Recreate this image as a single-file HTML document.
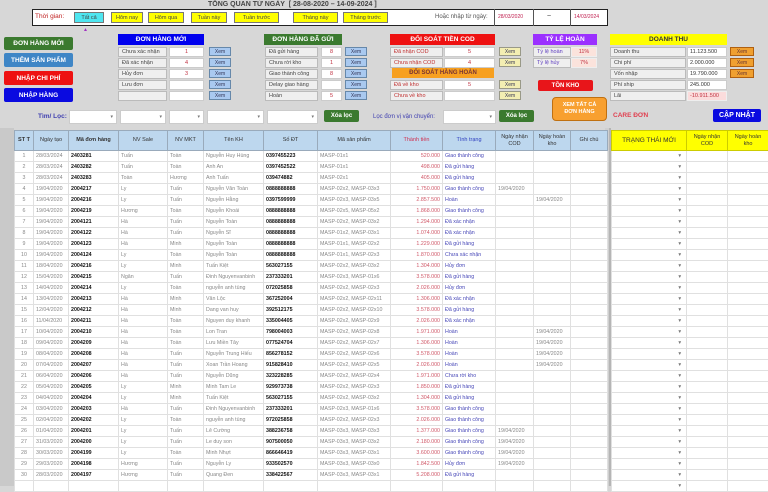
<!DOCTYPE html>
<html><head><meta charset="utf-8">
<style>
*{margin:0;padding:0;box-sizing:border-box}
body{width:768px;height:486px;overflow:hidden;background:#d7d7d7;font-family:"Liberation Sans",sans-serif;position:relative;font-size:6px;color:#333}
.a{position:absolute}
.t{position:absolute;white-space:nowrap;line-height:1}
.btn{position:absolute;display:flex;align-items:center;justify-content:center;font-weight:bold;color:#fff;border-radius:2px;white-space:nowrap}
.yb{position:absolute;background:#ffff00;border:1px solid #777;display:flex;align-items:center;justify-content:center;font-size:5.5px;color:#444;top:12px;height:11px}
.hd{position:absolute;display:flex;align-items:center;justify-content:center;font-weight:bold;font-size:6.5px;height:11px;top:34px}
.lb{position:absolute;background:#efefef;border:1px solid #bbb;height:10px;font-size:5.5px;padding-left:3px;line-height:9px;color:#444}
.vl{position:absolute;background:#fff;border:1px solid #ccc;height:10px;font-size:5.5px;text-align:center;line-height:9px;color:#c03040}
.xm{position:absolute;background:#a9c9f0;border:1px solid #6688aa;height:9px;width:22px;font-size:5px;text-align:center;line-height:8px;color:#335}
.xy{background:#f3eeb2;border-color:#998}
.xo{background:#f0a030;border-color:#b06010;color:#633}
.dd{position:absolute;background:#fff;top:110px;height:14px;border:1px solid #ccc}
.dd:after{content:"▾";position:absolute;right:3px;top:3px;font-size:5px;color:#777}
table{border-collapse:collapse;table-layout:fixed;position:absolute}
td,th{border:1px solid #e0e0e0;height:11px;font-size:5.3px;white-space:nowrap;overflow:hidden;padding:0 2px;font-weight:normal;color:#888}
th{background:#bdd7ee;border:1px solid #9ab;height:20px;color:#333;font-size:5.5px;white-space:normal;text-align:center;line-height:1.1}
tbody td{background:#fff}
td.b{color:#111;font-weight:bold}
td.r{color:#d05868;text-align:right}
td.s{color:#4848b8}
td.c{text-align:center}
#R th{background:#ffff00;border-color:#cc0}
#R td.d{text-align:right;padding-right:5px;color:#777}
</style></head><body>
<div class="a" style="left:0;top:128px;width:14px;height:358px;background:#c9c9c9"></div>
<div class="a" style="left:605px;top:128px;width:6px;height:358px;background:#cfcfcf;border-right:2px solid #b5b5b5"></div>

<div class="t" style="left:208px;top:1px;font-size:7px;font-weight:bold;color:#444">TỔNG QUAN TỪ NGÀY &nbsp;[ 28-08-2020 – 14-09-2024 ]</div>
<div class="a" style="left:32px;top:9px;width:576px;height:17px;background:#fff;border:1px solid #222"></div>
<div class="t" style="left:35px;top:14px;font-size:6.5px;color:#c02020">Thời gian:</div>
<div class="yb" style="left:74px;width:30px;background:#4ee6f0">Tất cả</div>
<div class="yb" style="left:111px;width:32px">Hôm nay</div>
<div class="yb" style="left:148px;width:36px">Hôm qua</div>
<div class="yb" style="left:191px;width:36px">Tuần này</div>
<div class="yb" style="left:234px;width:45px">Tuần trước</div>
<div class="yb" style="left:293px;width:45px">Tháng này</div>
<div class="yb" style="left:343px;width:45px">Tháng trước</div>
<div class="t" style="left:435px;top:14px;font-size:6px;color:#555">Hoặc nhập từ ngày:</div>
<div class="a" style="left:494px;top:9px;width:1px;height:17px;background:#555"></div>
<div class="t" style="left:498px;top:15px;font-size:5px;color:#c02050">28/03/2020</div>
<div class="a" style="left:533px;top:9px;width:1px;height:17px;background:#555"></div>
<div class="t" style="left:547px;top:13px;font-size:7px;color:#333">~</div>
<div class="a" style="left:570px;top:9px;width:1px;height:17px;background:#555"></div>
<div class="t" style="left:574px;top:15px;font-size:5px;color:#c02050">14/03/2024</div>
<div class="t" style="left:83px;top:28px;font-size:5px;color:#a030c0">▲</div>

<div class="btn" style="left:4px;top:37px;width:69px;height:13px;background:#3b7a2f;font-size:6.5px">ĐƠN HÀNG MỚI</div>
<div class="btn" style="left:4px;top:53px;width:69px;height:14px;background:#3f86c6;font-size:6.5px">THÊM SẢN PHẨM</div>
<div class="btn" style="left:4px;top:71px;width:69px;height:14px;background:#ee1111;font-size:6.5px">NHẬP CHI PHÍ</div>
<div class="btn" style="left:4px;top:88px;width:69px;height:14px;background:#0a0ae0;font-size:6.5px">NHẬP HÀNG</div>

<!-- Don hang moi -->
<div class="hd" style="left:118px;width:86px;background:#0000ee;color:#fff">ĐƠN HÀNG MỚI</div>
<div class="lb" style="left:118px;top:47px;width:49px">Chưa xác nhận</div><div class="vl" style="left:169px;top:47px;width:35px">1</div><div class="xm" style="left:209px;top:47px">Xem</div>
<div class="lb" style="left:118px;top:58px;width:49px">Đã xác nhận</div><div class="vl" style="left:169px;top:58px;width:35px">4</div><div class="xm" style="left:209px;top:58px">Xem</div>
<div class="lb" style="left:118px;top:69px;width:49px">Hủy đơn</div><div class="vl" style="left:169px;top:69px;width:35px">3</div><div class="xm" style="left:209px;top:69px">Xem</div>
<div class="lb" style="left:118px;top:80px;width:49px">Lưu đơn</div><div class="vl" style="left:169px;top:80px;width:35px"></div><div class="xm" style="left:209px;top:80px">Xem</div>
<div class="lb" style="left:118px;top:91px;width:49px"></div><div class="vl" style="left:169px;top:91px;width:35px"></div><div class="xm" style="left:209px;top:91px">Xem</div>

<!-- Don hang da gui -->
<div class="hd" style="left:264px;width:78px;background:#3b7a2f;color:#fff">ĐƠN HÀNG ĐÃ GỬI</div>
<div class="lb" style="left:265px;top:47px;width:53px">Đã gửi hàng</div><div class="vl" style="left:321px;top:47px;width:21px">8</div><div class="xm" style="left:345px;top:47px">Xem</div>
<div class="lb" style="left:265px;top:58px;width:53px">Chưa rời kho</div><div class="vl" style="left:321px;top:58px;width:21px">1</div><div class="xm" style="left:345px;top:58px">Xem</div>
<div class="lb" style="left:265px;top:69px;width:53px">Giao thành công</div><div class="vl" style="left:321px;top:69px;width:21px">8</div><div class="xm" style="left:345px;top:69px">Xem</div>
<div class="lb" style="left:265px;top:80px;width:53px">Delay giao hàng</div><div class="vl" style="left:321px;top:80px;width:21px"></div><div class="xm" style="left:345px;top:80px">Xem</div>
<div class="lb" style="left:265px;top:91px;width:53px">Hoàn</div><div class="vl" style="left:321px;top:91px;width:21px">5</div><div class="xm" style="left:345px;top:91px">Xem</div>

<!-- COD -->
<div class="hd" style="left:390px;width:105px;background:#ee1111;color:#fff">ĐỐI SOÁT TIỀN COD</div>
<div class="lb" style="left:390px;top:47px;width:53px;color:#c03030">Đã nhận COD</div><div class="vl" style="left:444px;top:47px;width:51px">5</div><div class="xm xy" style="left:499px;top:47px">Xem</div>
<div class="lb" style="left:390px;top:58px;width:53px;color:#c03030">Chưa nhận COD</div><div class="vl" style="left:444px;top:58px;width:51px">4</div><div class="xm xy" style="left:499px;top:58px">Xem</div>
<div class="hd" style="left:392px;top:68px;height:10px;width:102px;background:#f7a020;color:#733;font-size:6px">ĐỐI SOÁT HÀNG HOÀN</div>
<div class="lb" style="left:390px;top:80px;width:53px;color:#c03030">Đã về kho</div><div class="vl" style="left:444px;top:80px;width:51px">5</div><div class="xm xy" style="left:499px;top:80px">Xem</div>
<div class="lb" style="left:390px;top:91px;width:53px;color:#c03030">Chưa về kho</div><div class="vl" style="left:444px;top:91px;width:51px"></div><div class="xm xy" style="left:499px;top:91px">Xem</div>

<!-- Ty le hoan -->
<div class="hd" style="left:533px;width:64px;background:#9b30ff;color:#fff">TỶ LỆ HOÀN</div>
<div class="lb" style="left:533px;top:47px;width:38px;color:#6040c0">Tỷ lệ hoàn</div><div class="vl" style="left:571px;top:47px;width:26px;background:#fbe3dc;border-color:#eee">11%</div>
<div class="lb" style="left:533px;top:58px;width:38px;color:#6040c0">Tỷ lệ hủy</div><div class="vl" style="left:571px;top:58px;width:26px;background:#fbe3dc;border-color:#eee">7%</div>
<div class="btn" style="left:538px;top:80px;width:55px;height:11px;background:#e8151a;font-size:6px">TỒN KHO</div>
<div class="btn" style="left:552px;top:97px;width:55px;height:24px;background:#f8a030;border:1px solid #c07010;border-radius:4px;font-size:5.5px;line-height:1.2;text-align:center;flex-direction:column">XEM TẤT CẢ<br>ĐƠN HÀNG</div>

<!-- Doanh thu -->
<div class="hd" style="left:610px;width:117px;background:#ffff00;color:#333">DOANH THU</div>
<div class="lb" style="left:610px;top:47px;width:76px">Doanh thu</div><div class="vl" style="left:687px;top:47px;width:40px;text-align:left;padding-left:2px;color:#333">11.123.500</div><div class="xm xo" style="left:730px;top:47px;width:24px">Xem</div>
<div class="lb" style="left:610px;top:58px;width:76px">Chi phí</div><div class="vl" style="left:687px;top:58px;width:40px;text-align:left;padding-left:2px;color:#333">2.000.000</div><div class="xm xo" style="left:730px;top:58px;width:24px">Xem</div>
<div class="lb" style="left:610px;top:69px;width:76px">Vốn nhập</div><div class="vl" style="left:687px;top:69px;width:40px;text-align:left;padding-left:2px;color:#333">19.790.000</div><div class="xm xo" style="left:730px;top:69px;width:24px">Xem</div>
<div class="lb" style="left:610px;top:80px;width:76px">Phí ship</div><div class="vl" style="left:687px;top:80px;width:40px;text-align:left;padding-left:2px;color:#333">245.000</div>
<div class="lb" style="left:610px;top:91px;width:76px">Lãi</div><div class="vl" style="left:687px;top:91px;width:40px;text-align:left;padding-left:2px;background:#fbdcdc;border-color:#eee">-10.911.500</div>
<div class="t" style="left:613px;top:113px;font-size:6.5px;font-weight:bold;color:#e04050">CARE ĐƠN</div>
<div class="btn" style="left:713px;top:109px;width:48px;height:13px;background:#0a0ae0;font-size:7px;border-radius:2px">CẬP NHẬT</div>

<!-- filter -->
<div class="t" style="left:38px;top:114px;font-size:6.5px;color:#4040b0;font-weight:bold">Tìm/ Lọc:</div>
<div class="dd" style="left:69px;width:48px"></div>
<div class="dd" style="left:120px;width:46px"></div>
<div class="dd" style="left:169px;width:35px"></div>
<div class="dd" style="left:207px;width:57px"></div>
<div class="dd" style="left:267px;width:51px"></div>
<div class="btn" style="left:324px;top:110px;width:35px;height:12px;background:#3b7a2f;font-size:6px">Xóa lọc</div>
<div class="t" style="left:373px;top:114px;font-size:6px;color:#4040b0">Lọc đơn vị vận chuyển:</div>
<div class="dd" style="left:443px;width:53px"></div>
<div class="btn" style="left:499px;top:110px;width:35px;height:12px;background:#3b7a2f;font-size:6px">Xóa lọc</div>

<table style="left:14px;top:130px;width:593px">
<colgroup><col style="width:19px"><col style="width:35px"><col style="width:50px"><col style="width:49px"><col style="width:36px"><col style="width:60px"><col style="width:54px"><col style="width:73px"><col style="width:52px"><col style="width:53px"><col style="width:38px"><col style="width:37px"><col style="width:37px"></colgroup>
<thead><tr><th style="font-weight:bold">ST T</th><th>Ngày tạo</th><th style="font-weight:bold">Mã đơn hàng</th><th>NV Sale</th><th>NV MKT</th><th>Tên KH</th><th>Số ĐT</th><th>Mã sản phẩm</th><th style="color:#d03050">Thành tiền</th><th style="color:#3040c0">Tình trạng</th><th>Ngày nhận COD</th><th>Ngày hoàn kho</th><th>Ghi chú</th></tr></thead>
<tbody>
<tr><td class="c">1</td><td>28/03/2024</td><td class="b">2403281</td><td>Tuấn</td><td>Toàn</td><td>Nguyễn Huy Hùng</td><td class="b">0397455223</td><td>MASP-01x1</td><td class="r">520.000</td><td class="s">Giao thành công</td><td></td><td></td><td></td></tr>
<tr><td class="c">2</td><td>28/03/2024</td><td class="b">2403282</td><td>Tuấn</td><td>Toàn</td><td>Anh An</td><td class="b">0397452522</td><td>MASP-01x1</td><td class="r">498.000</td><td class="s">Đã gửi hàng</td><td></td><td></td><td></td></tr>
<tr><td class="c">3</td><td>28/03/2024</td><td class="b">2403283</td><td>Toàn</td><td>Hương</td><td>Anh Tuấn</td><td class="b">039474882</td><td>MASP-02x1</td><td class="r">405.000</td><td class="s">Đã gửi hàng</td><td></td><td></td><td></td></tr>
<tr><td class="c">4</td><td>19/04/2020</td><td class="b">2004217</td><td>Ly</td><td>Tuấn</td><td>Nguyễn Văn Toàn</td><td class="b">0888888888</td><td>MASP-02x2, MASP-03x3</td><td class="r">1.750.000</td><td class="s">Giao thành công</td><td>19/04/2020</td><td></td><td></td></tr>
<tr><td class="c">5</td><td>19/04/2020</td><td class="b">2004216</td><td>Ly</td><td>Tuấn</td><td>Nguyễn Hằng</td><td class="b">0397599999</td><td>MASP-02x3, MASP-03x5</td><td class="r">2.857.500</td><td class="s">Hoàn</td><td></td><td>19/04/2020</td><td></td></tr>
<tr><td class="c">6</td><td>19/04/2020</td><td class="b">2004219</td><td>Hương</td><td>Toàn</td><td>Nguyễn Khoái</td><td class="b">0888888888</td><td>MASP-02x5, MASP-05x2</td><td class="r">1.868.000</td><td class="s">Giao thành công</td><td></td><td></td><td></td></tr>
<tr><td class="c">7</td><td>19/04/2020</td><td class="b">2004121</td><td>Hà</td><td>Tuấn</td><td>Nguyễn Toàn</td><td class="b">0888888888</td><td>MASP-02x2, MASP-03x2</td><td class="r">1.294.000</td><td class="s">Đã xác nhận</td><td></td><td></td><td></td></tr>
<tr><td class="c">8</td><td>19/04/2020</td><td class="b">2004122</td><td>Hà</td><td>Tuấn</td><td>Nguyễn Sĩ</td><td class="b">0888888888</td><td>MASP-01x2, MASP-03x1</td><td class="r">1.074.000</td><td class="s">Đã xác nhận</td><td></td><td></td><td></td></tr>
<tr><td class="c">9</td><td>19/04/2020</td><td class="b">2004123</td><td>Hà</td><td>Minh</td><td>Nguyễn Toàn</td><td class="b">0888888888</td><td>MASP-01x1, MASP-02x2</td><td class="r">1.229.000</td><td class="s">Đã gửi hàng</td><td></td><td></td><td></td></tr>
<tr><td class="c">10</td><td>19/04/2020</td><td class="b">2004124</td><td>Ly</td><td>Toàn</td><td>Nguyễn Toàn</td><td class="b">0888888888</td><td>MASP-01x1, MASP-02x3</td><td class="r">1.870.000</td><td class="s">Chưa xác nhận</td><td></td><td></td><td></td></tr>
<tr><td class="c">11</td><td>18/04/2020</td><td class="b">2004216</td><td>Ly</td><td>Minh</td><td>Tuấn Kiệt</td><td class="b">563027155</td><td>MASP-02x2, MASP-03x2</td><td class="r">1.304.000</td><td class="s">Hủy đơn</td><td></td><td></td><td></td></tr>
<tr><td class="c">12</td><td>15/04/2020</td><td class="b">2004215</td><td>Ngân</td><td>Tuấn</td><td>Đinh Nguyenvanbinh</td><td class="b">237333201</td><td>MASP-02x3, MASP-01x6</td><td class="r">3.578.000</td><td class="s">Đã gửi hàng</td><td></td><td></td><td></td></tr>
<tr><td class="c">13</td><td>14/04/2020</td><td class="b">2004214</td><td>Ly</td><td>Toàn</td><td>nguyễn anh tùng</td><td class="b">072025858</td><td>MASP-02x2, MASP-02x3</td><td class="r">2.026.000</td><td class="s">Hủy đơn</td><td></td><td></td><td></td></tr>
<tr><td class="c">14</td><td>13/04/2020</td><td class="b">2004213</td><td>Hà</td><td>Minh</td><td>Văn Lộc</td><td class="b">367252004</td><td>MASP-02x2, MASP-02x11</td><td class="r">1.306.000</td><td class="s">Đã xác nhận</td><td></td><td></td><td></td></tr>
<tr><td class="c">15</td><td>12/04/2020</td><td class="b">2004212</td><td>Hà</td><td>Minh</td><td>Dang van huy</td><td class="b">392512175</td><td>MASP-02x2, MASP-02x10</td><td class="r">3.578.000</td><td class="s">Đã gửi hàng</td><td></td><td></td><td></td></tr>
<tr><td class="c">16</td><td>11/04/2020</td><td class="b">2004211</td><td>Hà</td><td>Toàn</td><td>Nguyen duy khanh</td><td class="b">335004405</td><td>MASP-02x2, MASP-02x9</td><td class="r">2.026.000</td><td class="s">Đã xác nhận</td><td></td><td></td><td></td></tr>
<tr><td class="c">17</td><td>10/04/2020</td><td class="b">2004210</td><td>Hà</td><td>Toàn</td><td>Lon Tran</td><td class="b">798004003</td><td>MASP-02x2, MASP-02x8</td><td class="r">1.971.000</td><td class="s">Hoàn</td><td></td><td>19/04/2020</td><td></td></tr>
<tr><td class="c">18</td><td>09/04/2020</td><td class="b">2004209</td><td>Hà</td><td>Toàn</td><td>Lưu Miền Tây</td><td class="b">077524704</td><td>MASP-02x2, MASP-02x7</td><td class="r">1.306.000</td><td class="s">Hoàn</td><td></td><td>19/04/2020</td><td></td></tr>
<tr><td class="c">19</td><td>08/04/2020</td><td class="b">2004208</td><td>Hà</td><td>Tuấn</td><td>Nguyễn Trung Hiếu</td><td class="b">856278152</td><td>MASP-02x2, MASP-02x6</td><td class="r">3.578.000</td><td class="s">Hoàn</td><td></td><td>19/04/2020</td><td></td></tr>
<tr><td class="c">20</td><td>07/04/2020</td><td class="b">2004207</td><td>Hà</td><td>Tuấn</td><td>Xoan Trần Hoang</td><td class="b">915828410</td><td>MASP-02x2, MASP-02x5</td><td class="r">2.026.000</td><td class="s">Hoàn</td><td></td><td>19/04/2020</td><td></td></tr>
<tr><td class="c">21</td><td>06/04/2020</td><td class="b">2004206</td><td>Hà</td><td>Tuấn</td><td>Nguyễn Dũng</td><td class="b">323228285</td><td>MASP-02x2, MASP-02x4</td><td class="r">1.971.000</td><td class="s">Chưa rời kho</td><td></td><td></td><td></td></tr>
<tr><td class="c">22</td><td>05/04/2020</td><td class="b">2004205</td><td>Ly</td><td>Minh</td><td>Minh Tam Le</td><td class="b">929973738</td><td>MASP-02x2, MASP-02x3</td><td class="r">1.850.000</td><td class="s">Đã gửi hàng</td><td></td><td></td><td></td></tr>
<tr><td class="c">23</td><td>04/04/2020</td><td class="b">2004204</td><td>Ly</td><td>Minh</td><td>Tuấn Kiệt</td><td class="b">563027155</td><td>MASP-02x2, MASP-03x2</td><td class="r">1.304.000</td><td class="s">Đã gửi hàng</td><td></td><td></td><td></td></tr>
<tr><td class="c">24</td><td>03/04/2020</td><td class="b">2004203</td><td>Hà</td><td>Tuấn</td><td>Đinh Nguyenvanbinh</td><td class="b">237333201</td><td>MASP-02x3, MASP-01x6</td><td class="r">3.578.000</td><td class="s">Giao thành công</td><td></td><td></td><td></td></tr>
<tr><td class="c">25</td><td>02/04/2020</td><td class="b">2004202</td><td>Ly</td><td>Toàn</td><td>nguyễn anh tùng</td><td class="b">972025858</td><td>MASP-02x2, MASP-02x3</td><td class="r">2.026.000</td><td class="s">Giao thành công</td><td></td><td></td><td></td></tr>
<tr><td class="c">26</td><td>01/04/2020</td><td class="b">2004201</td><td>Ly</td><td>Tuấn</td><td>Lê Cường</td><td class="b">388236758</td><td>MASP-03x3, MASP-03x3</td><td class="r">1.377.000</td><td class="s">Giao thành công</td><td>19/04/2020</td><td></td><td></td></tr>
<tr><td class="c">27</td><td>31/03/2020</td><td class="b">2004200</td><td>Ly</td><td>Tuấn</td><td>Le duy son</td><td class="b">907500050</td><td>MASP-03x3, MASP-03x2</td><td class="r">2.180.000</td><td class="s">Giao thành công</td><td>19/04/2020</td><td></td><td></td></tr>
<tr><td class="c">28</td><td>30/03/2020</td><td class="b">2004199</td><td>Ly</td><td>Toàn</td><td>Minh Nhựt</td><td class="b">866646419</td><td>MASP-03x3, MASP-03x1</td><td class="r">3.600.000</td><td class="s">Giao thành công</td><td>19/04/2020</td><td></td><td></td></tr>
<tr><td class="c">29</td><td>29/03/2020</td><td class="b">2004198</td><td>Hương</td><td>Tuấn</td><td>Nguyễn Ly</td><td class="b">933502570</td><td>MASP-03x3, MASP-03x0</td><td class="r">1.842.500</td><td class="s">Hủy đơn</td><td>19/04/2020</td><td></td><td></td></tr>
<tr><td class="c">30</td><td>28/03/2020</td><td class="b">2004197</td><td>Hương</td><td>Tuấn</td><td>Quang Đen</td><td class="b">338422567</td><td>MASP-03x3, MASP-03x1</td><td class="r">5.208.000</td><td class="s">Đã gửi hàng</td><td></td><td></td><td></td></tr>
<tr><td></td><td></td><td></td><td></td><td></td><td></td><td></td><td></td><td></td><td></td><td></td><td></td><td></td></tr>
</tbody></table>

<table id="R" style="left:611px;top:130px;width:157px">
<colgroup><col style="width:75px"><col style="width:41px"><col style="width:41px"></colgroup>
<thead><tr><th style="font-size:6.5px">TRẠNG THÁI MỚI</th><th>Ngày nhận COD</th><th>Ngày hoàn kho</th></tr></thead>
<tbody>
<tr><td class="d">▾</td><td></td><td></td></tr><tr><td class="d">▾</td><td></td><td></td></tr><tr><td class="d">▾</td><td></td><td></td></tr><tr><td class="d">▾</td><td></td><td></td></tr><tr><td class="d">▾</td><td></td><td></td></tr>
<tr><td class="d">▾</td><td></td><td></td></tr><tr><td class="d">▾</td><td></td><td></td></tr><tr><td class="d">▾</td><td></td><td></td></tr><tr><td class="d">▾</td><td></td><td></td></tr><tr><td class="d">▾</td><td></td><td></td></tr>
<tr><td class="d">▾</td><td></td><td></td></tr><tr><td class="d">▾</td><td></td><td></td></tr><tr><td class="d">▾</td><td></td><td></td></tr><tr><td class="d">▾</td><td></td><td></td></tr><tr><td class="d">▾</td><td></td><td></td></tr>
<tr><td class="d">▾</td><td></td><td></td></tr><tr><td class="d">▾</td><td></td><td></td></tr><tr><td class="d">▾</td><td></td><td></td></tr><tr><td class="d">▾</td><td></td><td></td></tr><tr><td class="d">▾</td><td></td><td></td></tr>
<tr><td class="d">▾</td><td></td><td></td></tr><tr><td class="d">▾</td><td></td><td></td></tr><tr><td class="d">▾</td><td></td><td></td></tr><tr><td class="d">▾</td><td></td><td></td></tr><tr><td class="d">▾</td><td></td><td></td></tr>
<tr><td class="d">▾</td><td></td><td></td></tr><tr><td class="d">▾</td><td></td><td></td></tr><tr><td class="d">▾</td><td></td><td></td></tr><tr><td class="d">▾</td><td></td><td></td></tr><tr><td class="d">▾</td><td></td><td></td></tr>
<tr><td class="d">▾</td><td></td><td></td></tr>
</tbody></table>
</body></html>
